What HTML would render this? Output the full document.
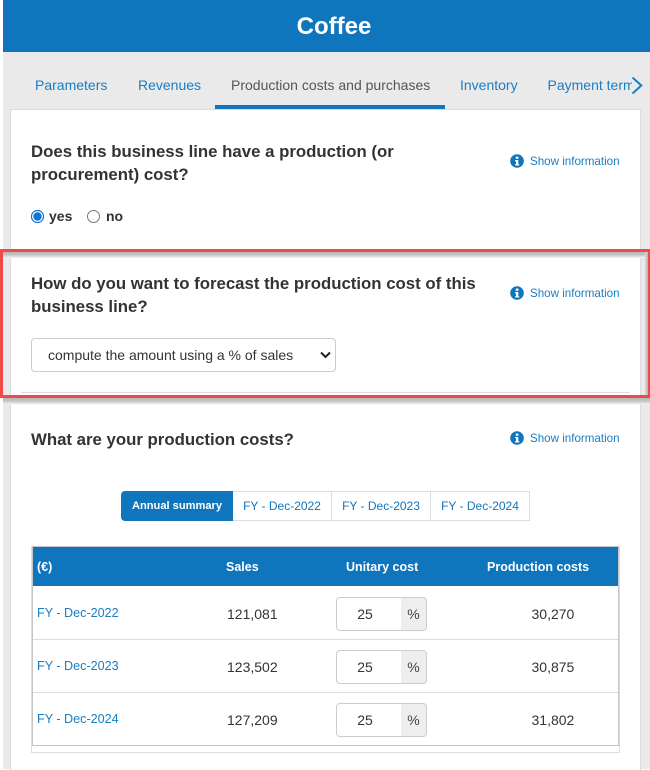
<!DOCTYPE html>
<html>
<head>
<meta charset="utf-8">
<style>
html,body{margin:0;padding:0;}
body{width:650px;height:769px;overflow:hidden;position:relative;background:#fff;font-family:"Liberation Sans",Arial,sans-serif;}
.a{position:absolute;white-space:nowrap;}
.tab{top:77px;font-size:14px;line-height:16px;color:#1a7ec2;}
.q{left:31px;font-size:16.8px;font-weight:bold;line-height:23px;color:#333;}
.info{left:510px;width:110px;height:14px;}
.info svg{position:absolute;left:0;top:-1px;}
.info span{position:absolute;left:20px;top:0;font-size:11.6px;line-height:14px;color:#1a7ec2;}
.seg{top:491px;height:30px;box-sizing:border-box;border:1px solid #ddd;border-left:0;font-size:12px;line-height:28px;text-align:center;color:#0f75bc;background:#fff;}
.th{top:560px;font-size:12.5px;line-height:15px;font-weight:bold;color:#fff;}
.fy{left:37px;font-size:12.6px;line-height:14px;color:#1a7ec2;}
.n{font-size:14px;line-height:16px;color:#333;}
.inp{left:336px;width:56px;padding-right:8px;height:32px;border:1px solid #ccc;border-radius:4px 0 0 4px;background:#fff;font-size:14px;line-height:32px;color:#333;text-align:center;}
.pct{left:401px;width:25px;height:32px;border:1px solid #ccc;border-left:0;border-radius:0 4px 4px 0;background:#eee;font-size:14px;line-height:32px;color:#444;text-align:center;}
.hr{left:33px;width:585px;height:1px;background:#ddd;}
</style>
</head>
<body>
<div class="a" style="left:3px;top:0;width:647px;height:769px;background:#eaeaea;"></div>
<div class="a" style="left:3px;top:0;width:647px;height:52px;background:#0f75bc;"></div>
<div class="a" style="left:3px;top:13px;width:662px;text-align:center;font-size:24px;line-height:28px;font-weight:bold;color:#fff;">Coffee</div>

<div class="a tab" style="left:35px;">Parameters</div>
<div class="a tab" style="left:138px;">Revenues</div>
<div class="a tab" style="left:231px;color:#555;">Production costs and purchases</div>
<div class="a tab" style="left:460px;">Inventory</div>
<div class="a tab" style="left:547.5px;width:84px;overflow:hidden;">Payment terms</div>
<svg class="a" style="left:630px;top:76px;" width="14" height="20" viewBox="0 0 14 20"><path d="M2.5 1.5 L11.3 9.5 L2.5 17.5" fill="none" stroke="#1a7ec2" stroke-width="2"/></svg>

<div class="a" style="left:10px;top:109px;width:629px;height:660px;background:#fff;border:1px solid #ddd;border-bottom:0;"></div>
<div class="a" style="left:215px;top:105px;width:230px;height:4px;background:#0f75bc;"></div>

<div class="a q" style="top:140px;">Does this business line have a production (or<br>procurement) cost?</div>
<div class="a info" style="top:155px;"><svg width="14" height="14" viewBox="0 0 14 14"><circle cx="7" cy="7" r="6.8" fill="#0f75bc"/><rect x="5.8" y="2.6" width="2.6" height="2.2" fill="#fff"/><path d="M5 6H8.3V10.2H9.3V11.5H5V10.2H6V7.3H5Z" fill="#fff"/></svg><span>Show information</span></div>

<svg class="a" style="left:30px;top:209px;" width="15" height="15" viewBox="0 0 15 15"><circle cx="7.5" cy="7.5" r="6" fill="#fff" stroke="#0f75d0" stroke-width="1.2"/><circle cx="7.5" cy="7.5" r="4.2" fill="#0f75d0"/></svg>
<div class="a" style="left:49px;top:208px;font-size:14px;line-height:16px;font-weight:bold;color:#333;">yes</div>
<svg class="a" style="left:86px;top:209px;" width="15" height="15" viewBox="0 0 15 15"><circle cx="7.5" cy="7.5" r="6" fill="#fff" stroke="#777" stroke-width="1"/></svg>
<div class="a" style="left:106px;top:208px;font-size:14px;line-height:16px;font-weight:bold;color:#333;">no</div>

<!-- highlighted section -->
<div class="a" style="left:3px;top:252px;width:645px;height:6px;background:linear-gradient(#b4b7b9,#c4c6c8 50%,#f6f6f6);"></div>
<div class="a" style="left:3px;top:398px;width:647px;height:7px;background:linear-gradient(#b4b7b9,#c4c6c8 45%,#f0f0f0 85%,rgba(255,255,255,0));"></div>
<div class="a" style="left:645px;top:252px;width:3px;height:143px;background:linear-gradient(90deg,#dcdcdc,#b0b3b5);"></div>
<div class="a" style="left:3px;top:258px;width:7px;height:137px;background:#eaeaea;"></div>
<div class="a" style="left:21px;top:392px;width:609px;height:1px;background:#ddd;"></div>
<div class="a" style="left:0;top:249px;width:650px;height:149px;box-sizing:border-box;border:3px solid #f14848;border-right-width:2px;"></div>

<div class="a q" style="top:272px;">How do you want to forecast the production cost of this<br>business line?</div>
<div class="a info" style="top:287px;"><svg width="14" height="14" viewBox="0 0 14 14"><circle cx="7" cy="7" r="6.8" fill="#0f75bc"/><rect x="5.8" y="2.6" width="2.6" height="2.2" fill="#fff"/><path d="M5 6H8.3V10.2H9.3V11.5H5V10.2H6V7.3H5Z" fill="#fff"/></svg><span>Show information</span></div>

<div class="a" style="left:31px;top:338px;width:303px;height:32px;border:1px solid #ccc;border-radius:4px;background:#fff;"></div>
<div class="a" style="left:48px;top:347px;font-size:14px;line-height:16px;color:#333;">compute the amount using a % of sales</div>
<svg class="a" style="left:320px;top:351px;" width="11" height="8" viewBox="0 0 11 8"><path d="M1 1.5 L5.5 6 L10 1.5" fill="none" stroke="#222" stroke-width="2"/></svg>

<div class="a q" style="top:428px;">What are your production costs?</div>
<div class="a info" style="top:432px;"><svg width="14" height="14" viewBox="0 0 14 14"><circle cx="7" cy="7" r="6.8" fill="#0f75bc"/><rect x="5.8" y="2.6" width="2.6" height="2.2" fill="#fff"/><path d="M5 6H8.3V10.2H9.3V11.5H5V10.2H6V7.3H5Z" fill="#fff"/></svg><span>Show information</span></div>

<div class="a seg" style="left:121px;width:112px;border:0;background:#0f75bc;color:#fff;font-weight:bold;font-size:11.1px;border-radius:4px 0 0 4px;line-height:30px;">Annual summary</div>
<div class="a seg" style="left:233px;width:99px;">FY - Dec-2022</div>
<div class="a seg" style="left:332px;width:99px;">FY - Dec-2023</div>
<div class="a seg" style="left:431px;width:99px;">FY - Dec-2024</div>

<div class="a" style="left:31px;top:546px;width:587px;height:205px;border:1px solid #ddd;"></div>
<div class="a" style="left:32px;top:546px;width:585px;height:198px;border:1px solid #c6c6c6;"></div>
<div class="a" style="left:33px;top:547px;width:585px;height:39px;background:#0f75bc;"></div>

<div class="a th" style="left:37px;">(€)</div>
<div class="a th" style="left:226px;">Sales</div>
<div class="a th" style="left:346px;">Unitary cost</div>
<div class="a th" style="left:487px;">Production costs</div>

<div class="a hr" style="top:639px;"></div>
<div class="a hr" style="top:692px;"></div>

<div class="a fy" style="top:606px;">FY - Dec-2022</div>
<div class="a fy" style="top:659px;">FY - Dec-2023</div>
<div class="a fy" style="top:712px;">FY - Dec-2024</div>

<div class="a n" style="left:227px;top:606px;">121,081</div>
<div class="a n" style="left:227px;top:659px;">123,502</div>
<div class="a n" style="left:227px;top:712px;">127,209</div>

<div class="a inp" style="top:597px;">25</div><div class="a pct" style="top:597px;">%</div>
<div class="a inp" style="top:650px;">25</div><div class="a pct" style="top:650px;">%</div>
<div class="a inp" style="top:703px;">25</div><div class="a pct" style="top:703px;">%</div>

<div class="a n" style="left:531.5px;top:606px;">30,270</div>
<div class="a n" style="left:531.5px;top:659px;">30,875</div>
<div class="a n" style="left:531.5px;top:712px;">31,802</div>
</body>
</html>
